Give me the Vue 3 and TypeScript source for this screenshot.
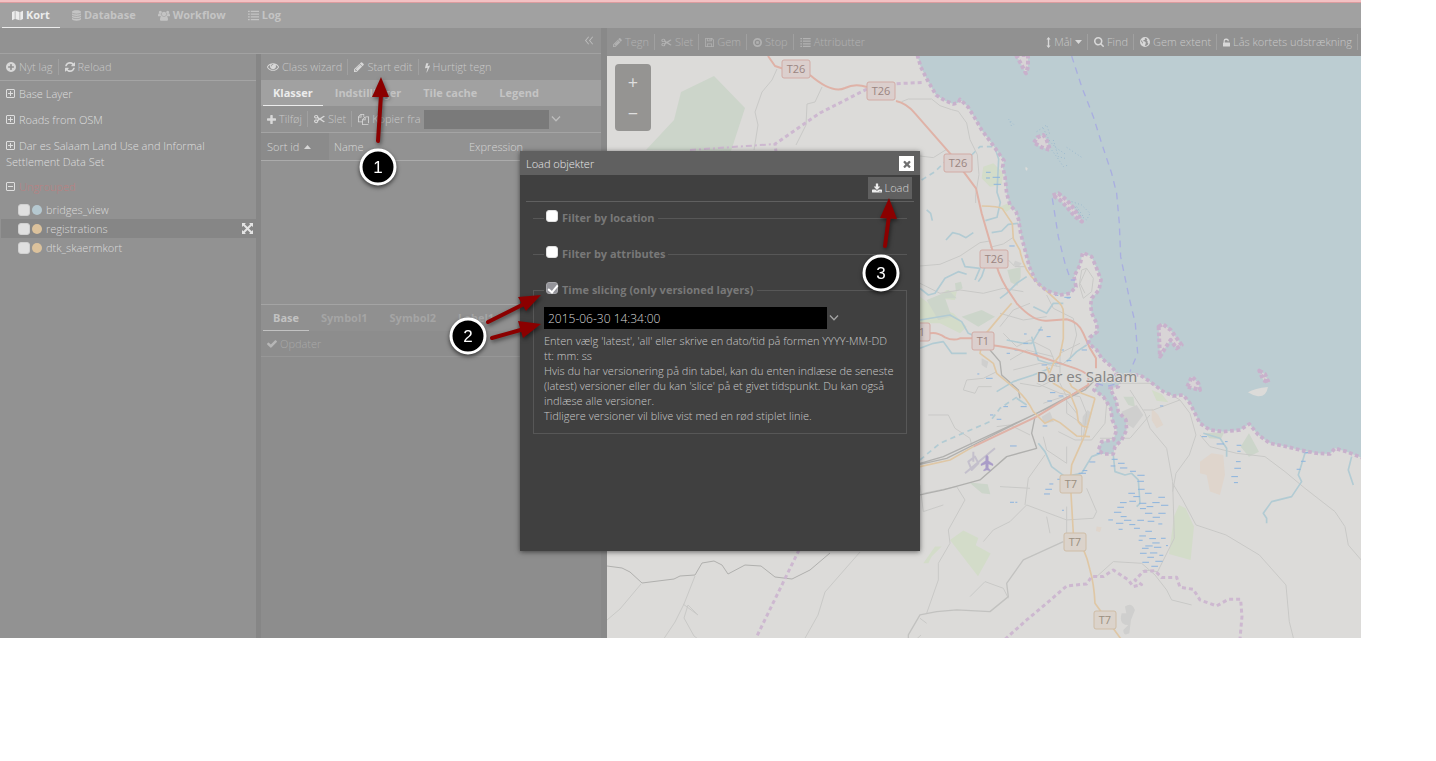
<script setup lang="ts">
import { h, ref } from 'vue'

interface Glyph { box: string; d: string }

const glyphs: Record<string, Glyph> = {
  map: { box: '0 0 16 14', d: 'M0 2l4-2v12l-4 2zM5 0l6 2v12l-6-2zM12 2l4-2v12l-4 2z' },
  database: { box: '0 0 14 16', d: 'M7 0c4 0 7 1 7 2.300V3c0 1.300-3 2.300-7 2.300S0 4.300 0 3v-.7C0 1 3 0 7 0zM0 4.500c1.500 1.300 4 1.800 7 1.800s5.500-.5 7-1.800v2c0 1.300-3 2.300-7 2.300S0 7.800 0 6.500zM0 8c1.500 1.300 4 1.800 7 1.800s5.500-.5 7-1.800v2c0 1.300-3 2.300-7 2.300S0 11.300 0 10zM0 11.500c1.500 1.300 4 1.800 7 1.800s5.500-.5 7-1.800v2C14 15 11 16 7 16s-7-1-7-2.500z' },
  users: { box: '0 0 18 16', d: 'M3.500 1a2.300 2.300 0 1 1 0 4.600a2.300 2.300 0 1 1 0-4.600zM14.500 1a2.300 2.300 0 1 1 0 4.600a2.300 2.300 0 1 1 0-4.600zM9 2.500a3.300 3.300 0 1 1 0 6.600a3.300 3.300 0 1 1 0-6.600zM0 9V7.500C0 6 .8 5 1.500 5c1 1 2.500 1.400 3.500.9C4.800 7.200 5.200 8 5.800 9zM18 9V7.500C18 6 17.200 5 16.500 5c-1 1-2.500 1.400-3.500.9c.2 1.300-.2 2.100-.8 3.100zM3 14c0-3 1-5.300 3-5.300C7.800 10.200 10.200 10.200 12 8.700c2 0 3 2.300 3 5.300c0 1.200-.8 2-2 2H5c-1.200 0-2-.8-2-2z' },
  list: { box: '0 0 16 14', d: 'M0 0h2.500v2H0zM4 0h12v2H4zM0 4h2.500v2H0zM4 4h12v2H4zM0 8h2.500v2H0zM4 8h12v2H4zM0 12h2.500v2H0zM4 12h12v2H4z' },
  plusCircle: { box: '128 128 1536 1536', d: 'M1344 960v-128q0-26-19-45t-45-19h-256v-256q0-26-19-45t-45-19h-128q-26 0-45 19t-19 45v256h-256q-26 0-45 19t-19 45v128q0 26 19 45t45 19h256v256q0 26 19 45t45 19h128q26 0 45-19t19-45v-256h256q26 0 45-19t19-45zm320-64q0 209-103 385.500t-279.500 279.500-385.500 103-385.500-103-279.500-279.500-103-385.500 103-385.500 279.500-279.500 385.500-103 385.500 103 279.500 279.500 103 385.500z' },
  refresh: { box: '128 128 1536 1536', d: 'M1639 1056q0 5-1 7-64 268-268 434.500t-478 166.500q-146 0-282.500-55t-243.500-157l-129 129q-19 19-45 19t-45-19-19-45v-448q0-26 19-45t45-19h448q26 0 45 19t19 45-19 45l-137 137q71 66 161 102t187 36q134 0 250-65t186-179q11-17 53-117 8-23 30-23h192q13 0 22.500 9.500t9.500 22.500zm25-800v448q0 26-19 45t-45 19h-448q-26 0-45-19t-19-45 19-45l138-138q-148-137-349-137-134 0-250 65t-186 179q-11 17-53 117-8 23-30 23h-199q-13 0-22.500-9.500t-9.500-22.500v-7q65-268 270-434.500t480-166.500q146 0 284 55.500t245 156.500l130-129q19-19 45-19t45 19 19 45z' },
  eye: { box: '0 384 1792 1152', d: 'M1664 960q-152-236-381-353 61 104 61 225 0 185-131.500 316.500t-316.500 131.500-316.500-131.500-131.500-316.500q0-121 61-225-229 117-381 353 133 205 333.500 326.500t434.500 121.500 434.500-121.500 333.500-326.500zm-720-384q0-20-14-34t-34-14q-125 0-214.500 89.500t-89.500 214.500q0 20 14 34t34 14 34-14 14-34q0-86 61-147t147-61q20 0 34-14t14-34zm848 384q0 34-20 69-140 230-376.500 368.500t-499.500 138.500-499.500-139-376.500-368q-20-35-20-69t20-69q140-229 376.500-368t499.500-139 499.500 139 376.500 368q20 35 20 69z' },
  pencil: { box: '128 128 1536 1536', d: 'M491 1536l91-91-235-235-91 91v107h128v128h107zm523-928q0-22-22-22-10 0-17 7l-542 542q-7 7-7 17 0 22 22 22 10 0 17-7l542-542q7-7 7-17zm-54-192l416 416-832 832h-416v-416zm683 96q0 53-37 90l-166 166-416-416 166-165q36-38 90-38 53 0 91 38l235 234q37 39 37 91z' },
  bolt: { box: '448 0 896 1792', d: 'M1333 566q18 20 7 44l-540 1157q-13 25-42 25-4 0-14-2-17-5-25.500-19t-4.500-30l197-808-406 101q-4 1-12 1-18 0-31-11-18-15-13-39l201-825q4-14 16-23t28-9h328q19 0 32 12.500t13 29.500q0 8-5 18l-171 463 396-98q8-2 12-2 19 0 34 15z' },
  plus: { box: '192 128 1408 1408', d: 'M1600 736v192q0 40-28 68t-68 28h-416v416q0 40-28 68t-68 28h-192q-40 0-68-28t-28-68v-416h-416q-40 0-68-28t-28-68v-192q0-40 28-68t68-28h416v-416q0-40 28-68t68-28h192q40 0 68 28t28 68v416h416q40 0 68 28t28 68z' },
  scissors: { box: '0 0 16 14', d: 'M3.200 1C5 1 6.400 2.300 6.200 4l2.100 1.800L14 2.200l2 .9L10.500 7L16 10.900l-2 .9L8.300 8.200L6.200 10c.2 1.700-1.200 3-3 3S0 11.900 0 10.300S1.300 7.700 3 7.700c.8 0 1.400.2 1.800.5L6.200 7L4.800 5.800c-.4.3-1 .5-1.800.5C1.300 6.300 0 5.200 0 3.700S1.400 1 3.200 1zM3 2.500c-.8 0-1.400.5-1.400 1.200s.6 1.200 1.400 1.200s1.500-.5 1.500-1.200S3.800 2.500 3 2.500zM3 9.100c-.8 0-1.400.5-1.400 1.200s.6 1.200 1.400 1.200s1.500-.5 1.500-1.200S3.800 9.100 3 9.100z' },
  copy: { box: '0 0 16 16', d: 'M4 0h5v4.500h2V3.500h5V13h-1V16H6v-4H0V4zM4 1.500L1.500 4H4zM5 1.200V5H1.200v5.800H6V8l3-3V4.500H8V1.200zM10 5.500L7.500 8H10zM11 4.700V9H7.200v5.800h7.600V4.700z' },
  save: { box: '0 0 14 14', d: 'M0 1q0-1 1-1h10l3 3v10q0 1-1 1H1q-1 0-1-1zM1.200 1.200v11.600H3V8.500h8v4.300h1.800V3.500L10.500 1.200V5H3V1.200zM4.200 1.200v2.600h5V1.200zM4.200 9.700v3.100h5.600V9.700zM7 1.500h1.500v2H7z' },
  stop: { box: '0 0 14 14', d: 'M7 0a7 7 0 1 1 0 14a7 7 0 1 1 0-14zM7 2.700a4.300 4.300 0 1 0 0 8.600a4.300 4.300 0 1 0 0-8.600zM5 5h4v4H5z' },
  arrowsV: { box: '0 0 6 16', d: 'M3 0l3 3.500H4v9h2L3 16l-3-3.500h2v-9H0z' },
  caretDown: { box: '0 0 14 8', d: 'M0 0h14L7 8z' },
  caretUp: { box: '0 0 14 8', d: 'M0 8h14L7 0z' },
  search: { box: '64 128 1664 1664', d: 'M1216 832q0-185-131.500-316.500t-316.500-131.500-316.500 131.500-131.500 316.500 131.500 316.500 316.500 131.500 316.500-131.500 131.500-316.500zm512 832q0 52-38 90t-90 38q-54 0-90-38l-343-342q-179 124-399 124-143 0-273.500-55.500t-225-150-150-225-55.500-273.500 55.500-273.500 150-225 225-150 273.500-55.500 273.500 55.500 225 150 150 225 55.500 273.500q0 220-124 399l343 343q37 37 37 90z' },
  globe: { box: '0 0 14 14', d: 'M7 0a7 7 0 1 1 0 14a7 7 0 1 1 0-14zM8 1.300l-1.500.9l.8 1L6 4.200l-1.500.3L5 6l2 .3L8.200 8L7.500 10.500l-.8 2C9.500 12.600 11 11 11.800 9.500L10.500 8l.3-1.700L9.300 5l1-2zM2.500 4.200L1.500 6l2.300 3.400l.6-1L3.500 7z' },
  unlock: { box: '0 0 12 14', d: 'M3 7V4.500q0-2 2-2h1q2 0 2 2V5h2V4q0-4-4-4H5Q1 0 1 4v3q-1 0-1 1v5q0 1 1 1h10q1 0 1-1V8q0-1-1-1z' },
  check: { box: '121 188 1550 1334', d: 'M1671 566q0 40-28 68l-724 724-136 136q-28 28-68 28t-68-28l-136-136-362-362q-28-28-28-68t28-68l136-136q28-28 68-28t68 28l294 295 656-657q28-28 68-28t68 28l136 136q28 28 28 68z' },
  times: { box: '302 238 1188 1316', d: 'M1490 1322q0 40-28 68l-136 136q-28 28-68 28t-68-28l-294-294-294 294q-28 28-68 28t-68-28l-136-136q-28-28-28-68t28-68l294-294-294-294q-28-28-28-68t28-68l136-136q28-28 68-28t68 28l294 294 294-294q28-28 68-28t68 28l136 136q28 28 28 68t-28 68l-294 294 294 294q28 28 28 68z' },
  download: { box: '64 0 1664 1536', d: 'M1344 1344q0-26-19-45t-45-19-45 19-19 45 19 45 45 19 45-19 19-45zm256 0q0-26-19-45t-45-19-45 19-19 45 19 45 45 19 45-19 19-45zm128-224v320q0 40-28 68t-68 28h-1472q-40 0-68-28t-28-68v-320q0-40 28-68t68-28h465l135 136q58 56 136 56t136-56l136-136h464q40 0 68 28t28 68zm-325-569q17 41-14 70l-448 448q-18 19-45 19t-45-19l-448-448q-31-29-14-70 17-39 59-39h256v-448q0-26 19-45t45-19h256q26 0 45 19t19 45v448h256q42 0 59 39z' },
  expand: { box: '0 0 14 14', d: 'M0 0h5L3.500 1.700L7 5.200l3.500-3.500L9 0h5v5l-1.700-1.500L8.800 7l3.500 3.500L14 9v5H9l1.500-1.700L7 8.800l-3.500 3.500L5 14H0V9l1.700 1.500L5.200 7L1.700 3.500L0 5z' },
  plusBox: { box: '0 0 9 9', d: 'M1 0h7l1 1v7l-1 1H1L0 8V1zM1 1v7h7V1zM4 2h1v2h2v1H5v2H4V5H2V4h2z' },
  minusBox: { box: '0 0 9 9', d: 'M1 0h7l1 1v7l-1 1H1L0 8V1zM1 1v7h7V1zM2 4h5v1H2z' },
  chevron: { box: '0 0 12 8', d: 'M0 1.200L1.200 0L6 5L10.800 0L12 1.200L6 7.500z' },
  collapse: { box: '0 0 14 14', d: 'M6 0l1 .8L2 7l5 6.200L6 14L0 7zM13 0l1 .8L9 7l5 6.200L13 14L7 7z' },
}

const Icon = (props: { name: string; w: number; hgt: number }) =>
  h('svg', { viewBox: glyphs[props.name].box, width: props.w, height: props.hgt, 'aria-hidden': 'true' }, [
    h('path', { d: glyphs[props.name].d, 'fill-rule': 'evenodd', fill: 'currentColor' }),
  ])
Icon.props = ['name', 'w', 'hgt']

const mainTabs = [
  { label: 'Kort', icon: 'map', w: 11 },
  { label: 'Database', icon: 'database', w: 9 },
  { label: 'Workflow', icon: 'users', w: 12 },
  { label: 'Log', icon: 'list', w: 11 },
]
const classTabs = ['Klasser', 'Indstillinger', 'Tile cache', 'Legend']
const styleTabs = ['Base', 'Symbol1', 'Symbol2', 'Label1']
const groups = ['Base Layer', 'Roads from OSM', 'Dar es Salaam Land Use and Informal Settlement Data Set']
const layers = [
  { name: 'bridges_view', tone: 'blue', on: false },
  { name: 'registrations', tone: 'sand', on: true },
  { name: 'dtk_skaermkort', tone: 'sand', on: false },
]
const drawTools = [
  { label: 'Tegn', icon: 'pencil', w: 9 },
  { label: 'Slet', icon: 'scissors', w: 11 },
  { label: 'Gem', icon: 'save', w: 9 },
  { label: 'Stop', icon: 'stop', w: 9 },
  { label: 'Attributter', icon: 'list', w: 11 },
]
const shields = [
  { t: 'T26', x: 782, y: 60, w: 28, c: 'red' },
  { t: 'T26', x: 867, y: 82, w: 28, c: 'red' },
  { t: 'T26', x: 944, y: 154, w: 28, c: 'red' },
  { t: 'T26', x: 980, y: 250, w: 28, c: 'red' },
  { t: 'T1', x: 908, y: 323, w: 22, c: 'red' },
  { t: 'T1', x: 972, y: 332, w: 22, c: 'red' },
  { t: 'T7', x: 1060, y: 475, w: 22, c: 'tan' },
  { t: 'T7', x: 1064, y: 533, w: 22, c: 'tan' },
  { t: 'T7', x: 1094, y: 611, w: 22, c: 'tan' },
]
const byLocation = ref(false)
const byAttributes = ref(false)
const slicing = ref(true)
const moment = ref('2015-06-30 14:34:00')
const copyFrom = ref('')
</script>

<template>
  <div class="page">
    <div class="app">
      <div class="stripe"></div>
      <nav class="tabs main-tabs">
        <button v-for="(t, i) in mainTabs" :key="t.label" class="tab" :class="{ active: i === 0 }">
          <Icon :name="t.icon" :w="t.w" :hgt="11" /><span>{{ t.label }}</span>
        </button>
      </nav>

      <div class="body">
        <div class="side">
          <div class="side-head">
            <button class="plain" aria-label="Collapse"><Icon name="collapse" :w="8" :hgt="9" /></button>
          </div>
          <div class="side-body">
            <section class="tree">
              <div class="toolbar lined">
                <button class="tool"><Icon name="plusCircle" :w="10" :hgt="10" />Nyt lag</button>
                <button class="tool"><Icon name="refresh" :w="10" :hgt="10" />Reload</button>
              </div>
              <p v-for="g in groups" :key="g" class="group"><Icon name="plusBox" :w="9" :hgt="9" />{{ g }}</p>
              <p class="group ungrouped"><Icon name="minusBox" :w="9" :hgt="9" /><span>Ungrouped</span></p>
              <ul class="layers">
                <li v-for="l in layers" :key="l.name" :class="{ on: l.on }">
                  <label><input type="checkbox" class="box dim" /><i class="dot" :class="l.tone"></i>{{ l.name }}</label>
                  <button v-if="l.on" class="plain" aria-label="Zoom to layer"><Icon name="expand" :w="11" :hgt="11" /></button>
                </li>
              </ul>
            </section>

            <section class="classes">
              <div class="toolbar">
                <button class="tool"><Icon name="eye" :w="12" :hgt="8" />Class wizard</button>
                <button class="tool"><Icon name="pencil" :w="10" :hgt="10" />Start edit</button>
                <button class="tool"><Icon name="bolt" :w="5" :hgt="11" />Hurtigt tegn</button>
              </div>
              <div class="tabs">
                <button v-for="(t, i) in classTabs" :key="t" class="tab" :class="{ active: i === 0 }">{{ t }}</button>
              </div>
              <div class="toolbar lined">
                <button class="tool"><Icon name="plus" :w="9" :hgt="9" />Tilføj</button>
                <button class="tool"><Icon name="scissors" :w="11" :hgt="10" />Slet</button>
                <label class="tool copy" for="copy-from"><Icon name="copy" :w="11" :hgt="11" />Kopier fra</label>
                <input id="copy-from" v-model="copyFrom" class="combo" type="text" />
                <button class="plain drop" aria-label="Choose layer"><Icon name="chevron" :w="10" :hgt="6" /></button>
              </div>
              <div class="grid">
                <table>
                  <thead>
                    <tr><th class="sorted">Sort id <Icon name="caretUp" :w="7" :hgt="4" /></th><th class="name">Name</th><th>Expression</th></tr>
                  </thead>
                </table>
              </div>
              <div class="tabs faint">
                <button v-for="(t, i) in styleTabs" :key="t" class="tab" :class="{ active: i === 0 }">{{ t }}</button>
              </div>
              <div class="toolbar faint-bar">
                <button class="tool"><Icon name="check" :w="10" :hgt="9" />Opdater</button>
              </div>
            </section>
          </div>
        </div>

        <main class="map-pane">
          <div class="toolbar map-bar">
            <button v-for="t in drawTools" :key="t.label" class="tool off"><Icon :name="t.icon" :w="t.w" :hgt="9" />{{ t.label }}</button>
            <span class="spring"></span>
            <button class="tool"><Icon name="arrowsV" :w="5" :hgt="11" />Mål <Icon name="caretDown" :w="7" :hgt="4" /></button>
            <button class="tool"><Icon name="search" :w="10" :hgt="10" />Find</button>
            <button class="tool"><Icon name="globe" :w="10" :hgt="10" />Gem extent</button>
            <button class="tool"><Icon name="unlock" :w="7" :hgt="9" />Lås kortets udstrækning</button>
          </div>
          <div class="map">
            <svg class="chart" viewBox="607 56 754 582" preserveAspectRatio="xMinYMin slice" role="img" aria-label="Map">
              <path class="wood" d="M646 150L674 120L681 92L714 76L745 108L731 151z" />
              <g transform="translate(900 50) scale(.3333)">
                <g class="green">
                  <path d="M250 350l30-10 30 30-5 35-35 5-25-25zM105 745l35-25 30 5-5 25zM300 470l25-10 15 10-20 15zM60 740l40 30 60 20 40 40-20 20-60-30-60 0-30-40z" />
                  <path d="M150 1470l40-28 45 22-8 22 45 25-38 68zM822 1400l15-35 20 10 25 55-10 100-65-18zM70 1540l35-50 20 0-30 30-10 20z" />
                  <path d="M755 1020l30 12 20 25-35-5zM440 645l20 15-10 20z" />
                </g>
                <g class="wood">
                  <path d="M322 660l40-8 0 30-10 25-20-10zM165 700l18-5 5 20-20 10zM110 745l35-25 25 25zM80 750l50-20 25 70-40 10zM185 800l60-20 40 20-50 30zM1022 1190l25-40 30 55-30 15zM915 1150l58-3-10 20-35-2zM208 1298l55 5 8 30-25-3zM670 1040l30 0 5 30-20-5z" />
                </g>
                <path class="town" d="M345 632l20 8-10 12-15-8zM245 925l20 10-5 20-15-10zM425 1100l25-15 12 30-30 5zM548 1100l15-20 12 10-10 35-18 5zM665 1085l45-20 20 30-30 40-30-20zM675 1670q20-15 30 10l-12 30-5 40q-18 10-18-10l15-15q-30 0-20-35l14 0z" />
                <path class="sand" d="M755 1075l20 20 15 30-20 10-15-25zM900 1235l35-25 35 5 5 60-15 60-30-10-10-50-20-5zM590 1430l15 2-5 15-12-4z" />

                <g class="track">
                  <path d="M5 155l20-8 70 0 25 20 35 12 20 5 25 35 10 50 22 45 5 60-10 60 0 25M60 318l40 5 40-25" />
                  <path d="M60 648l60-5 60-25 60-40 30-5M270 592l40-10 30-20M325 630l20 20 30 0M60 700l60 30 60-10 70 10 60-15 60 10" />
                  <path d="M545 660l15-5 20 30-5 40-25 20-12-40zM560 655l-20 45 15 30M440 735l20 40 60 30 10 50-20 70-25 20" />
                  <path d="M300 830l40-50 50-20M310 850l40 40 40-20 60 30 20 50M330 930l50-30 80 20M340 960l80-20 60 10M360 1000l60 10 40-20M300 790l70 20 70-10" />
                  <path d="M85 1095l60 0 20 40 45 30 5 20M190 1020l10-30 50-5 40-20M190 1020l35 10 10-20 40 0M290 1130l40-5 60 30" />
                  <path d="M470 980l30 60 0 50 45 30 0 50M410 1000l70 30 60 10 20 50-10 70M430 1060l60-20 40 50M480 970l0-60 60-30M430 1160l10 40 60 40 0-50" />
                  <path d="M655 1000l100 0 85 50 30 40 18 65-20 60-40 55-10 55M690 1020l45 70 15 45 50 60 18 100 5 170-50 100-40-5M730 1080l30 0 80-30M600 1000l20 60-5 60-40 50-50 0-50-25M600 1165l90 0 60-70M900 1155l30 35 80 20 85 10 60 45 60 50 90 70 30 45 10 55 60 70" />
                  <path d="M818 1300l30 50 40 75 90 30 100 60 80 90 10 110 20 80M590 1580l50-45 85 5 40 35 35 45 15 30 60 15" />
                  <path d="M60 1305l10 80 60-20M70 1330l100-20 25 40-50 90 5 40-35 60 0 50-35 100M250 1475l30-35 50-25 50-50 120 45 80-5 10-20-30-70M300 1310l90 5M375 1365l10-80 50-70M440 1400l10 50M500 1370l0 90M60 1705l20 15M210 1640l45-45 55 20 15 30" />
                </g>
                <g class="rail">
                  <path d="M60 1240l70-20 280-130 145-70 30-30M60 1243l80-18 280-140 150-80" />
                  <path d="M270 900l30 35 5 40 50 45 5 25M60 1335l70-15 110-30 80-70 90-25-15-45 10-50" />
                  <path class="dim" d="M25 1765l0-10 35-60 50-10 60-5 100 5 55-45-5-40 50-70 120-55" />
                </g>

                <g class="river">
                  <path d="M80 480l12 10 5 22M138 570l20-22 20 5 20 10 22-15M185 625l10 25 45 5-15 35M60 715l25 20 20-5 30-45 40-20 25 8M255 650l-10 30-10 15M60 810l90-15 35 20 20 35 25 10M60 895l40-15 30-5 25 35 45 0" />
                  <path d="M275 548l30-5 20-20 30-3M256 512l35-10 10-45-10-30 5-100-10-30M300 745l20-15 30-30 30-20M415 1180l20 25 20 45 40 30 50-10 30-50 40-15M400 770l40 20 20-30 30 0" />
                  <path d="M320 870l50 10 25 0 30-50M395 860l20 70 30 10 40 0M290 1025l50-30 60-20 50-20M500 935l30-30 30-20M350 1045l30 20" />
                  <path d="M640 1215l5 50 30 10 20-5 20 20 5 70-10 10M910 1150l50 15 20 30 0 25M1235 1205l-20 5-20 65 10 20-30 45-60 15-25 35 10 15 0 15M1355 1220l-10 40 15 45" />
                </g>
                <path class="river broken" d="M60 1230l60-50 80-35 70-30 30-40 60-40M65 390l40-25 30-30M215 315l25-25 50 0" />
                <path class="marsh" d="M258 367h14M258 384h12M278 382h22M281 403h22M328 588h16M465 736h10M493 742h20M500 744h10M372 852h8M415 840h14M440 860h12M480 900h12M500 932h14M398 912h14M344 900h12M320 910h10M258 985h20M232 972h6M425 945h16M472 940h12M450 1028h16M476 1038h14M442 1053h14M310 1070h14M362 1070h18M290 1108h14M270 1095h10M780 1068h10M428 1128h14M545 900h16M370 880h14M330 1188h20M905 1160h16M950 1182h22M975 1175h8M1010 1186h14M1012 1204h10" />
                <path class="marsh" d="M590 1210h18M635 1228h18M654 1240h20M632 1248h14M660 1254h22M690 1264h18M712 1276h22M712 1294h20M568 1236h18M548 1262h14M536 1270h22M714 1318h20M685 1330h20M700 1340h20M735 1330h20M775 1342h20M660 1358h20M688 1354h20M717 1360h22M757 1358h22M740 1370h20M783 1366h22M652 1372h20M720 1376h18M642 1387h22M735 1390h22M775 1390h22M662 1400h18M758 1402h22M625 1410h14M672 1411h22M712 1411h20M743 1414h20M648 1420h22M688 1424h18M775 1422h12M702 1435h18M656 1438h12M736 1444h20M718 1458h20M783 1465h14M748 1466h20M716 1471h12M757 1479h22M736 1488h22M798 1487h6M726 1495h20M762 1492h22M720 1510h20M750 1509h22M778 1516h12M742 1522h20M766 1534h22M727 1537h20M754 1549h20M1008 1235h14M1003 1255h20M994 1280h20M1002 1298h12M448 1302h12M436 1318h20M432 1332h18M330 1357h12M346 1357h6M486 1381h6M1208 1208h20M1203 1234h14M1190 1258h12M472 1288h10" />

                <g class="trunk">
                  <path d="M-12 153Q20 160 45 190L150 310L228 415L245 490L280 610Q292 670 320 715L350 760Q400 815 440 812L500 808Q535 815 550 850L570 895L588 925V955" />
                  <path d="M90 850q20-5 45 12q25 12 45 3h45M270 885q80 10 120 25l120 40q50 15 55 30v25L410 1100L220 1190" />
                </g>
                <g class="road">
                  <path d="M245 468q50 0 62 8l30 45 3 45 20 35q10 60 50 95l60 55q20 15 20 35v80l-10 50-20 25-20 50M335 760l-35 40-50 60-10 50 40 30 10 30 60 50q30 25 50 65l35 35 25-12 20 10 50 40 40 2M440 950l20 50 50 30 20 50 5 35q15 20 30 15M585 1045l-30 110-40 90-4 50L520 1450Q555 1490 570 1560Q582 1600 585 1660L665 1770M585 1045l-40-15-30-20-10-20M220 1190l-70 40-90 20" />
                </g>

                <path class="sea" d="M52 15L62 50L82 90L108 135L135 152L160 162L175 158L180 148L205 172L225 205L245 240L275 280L300 315L312 332L308 350L315 380L320 430L330 465L348 485L356 510L362 550L375 600L388 650L408 695L440 722L480 735L510 730L528 710L522 680L540 645L548 608L575 620L590 655L603 690L597 720L575 745L572 765L575 790L590 820L592 845L570 862L565 880L590 900L605 925L635 950L650 970L640 990L600 990L582 1020L610 1040L632 1075L637 1110L650 1140L640 1170L605 1175L595 1200L610 1212L640 1212L645 1190L665 1170L680 1140L678 1110L655 1085L648 1050L630 1015L655 1010L660 990L690 975L720 975L750 995L790 1025L820 1038L850 1035L870 1060L885 1090L900 1120L930 1140L970 1145L1020 1140L1048 1122L1075 1155L1110 1180L1160 1190L1200 1200L1250 1210L1290 1212L1305 1195L1340 1205L1390 1225V5H52z" />
                <path class="isle" d="M348 15L362 40L378 70L384 50L384 15zM402 278L412 262L430 255L440 270L450 300L425 292zM458 436L475 430L500 450L525 480L546 515L525 500L500 470L480 450zM776 830L788 822L812 840L845 885L830 895L812 870L795 895L780 920zM1078 962L1095 972L1106 998L1090 990zM862 1010L876 980L895 1000L900 1020z" />
                <path class="land" d="M1044 1027q20-12 60-16q-5 30-30 28q-15-2-30-12zM377 350l6 5-2 8-5-5z" />
                <path class="ferry" d="M515 18L545 110L580 200L605 280L635 370L650 430L658 520L662 620L688 745L706 820L713 910L690 965M457 445L475 560L495 640L512 690L525 690M590 1000l30 10 40-12" />
                <g class="shoal">
                  <path d="M410 245l30-20 10 30M430 235l20 40 20 20 30 20M455 300l15 20 20 30 15-5M460 270l15 50 20 5M500 292l45 30M325 207l20 20M330 215l5 15M515 455l30 10 25 25-10 20-20-15-15-25M530 470l20 30" />
                </g>
                <path class="bound" d="M-10 101L72 97M315 1768L380 1710L440 1660L500 1608L560 1602L575 1580L610 1580L640 1560L685 1590L700 1610L725 1604L705 1590L730 1565L765 1562L785 1583L830 1582L840 1612L880 1618L900 1650L950 1668L985 1648L1022 1648L1026 1700L1020 1768" />
                <g class="plane"><path d="M195 1270l90-75M205 1235l20-15 10 20-20 20zM220 1205v30" /><path class="jet" d="M261 1215l4 5v12l14 10v5l-14-5v12l6 6v3l-10-3-10 3v-3l6-6v-12l-14 5v-5l14-10v-12z" /></g>
              </g>

              <path class="trunk thin" d="M768 56L775 66L784 69M810 75Q832 94 845 88Q855 83 867 87" />
              <path class="track px" d="M777 69L772 80L762 92L755 112L758 125L754 150M822 87L815 102L807 104L806 125L796 145M607 620L620 609L641 584M695 576L684 604L675 622L663 640M683 604L698 615L688 605L684 618L694 636L702 642M860 552L825 592L818 615L804 640M921 635L910 645" />
              <path class="rail px" d="M607 566L622 568L630 572L642 583L674 579L680 576L695 575L702 563L714 561L722 565L728 574L745 565L761 566L775 577L792 579L810 570L830 553" />
              <path class="bound px" d="M867 89L820 113L775 144L776 152M799 550L756 638" />
              <path class="bound faintly" d="M690 150L775 144" />
              <g v-for="(s, i) in shields" :key="i" class="shield" :class="s.c">
                <rect :x="s.x" :y="s.y" :width="s.w" height="18" rx="2" />
                <text :x="s.x + s.w / 2" :y="s.y + 13">{{ s.t }}</text>
              </g>
              <text class="city" x="1087" y="382">Dar es Salaam</text>
            </svg>
            <div class="zoom">
              <button aria-label="Zoom in">+</button>
              <button aria-label="Zoom out">−</button>
            </div>
          </div>
        </main>
      </div>
    </div>

    <div class="dialog" role="dialog" aria-labelledby="dialog-title">
      <header>
        <span id="dialog-title">Load objekter</span>
        <button class="close" aria-label="Close"><Icon name="times" :w="8" :hgt="8" /></button>
      </header>
      <div class="dialog-bar">
        <button class="load"><Icon name="download" :w="10" :hgt="10" />Load</button>
      </div>
      <form class="dialog-body" @submit.prevent>
        <fieldset class="flat"><legend><label><input v-model="byLocation" type="checkbox" class="box" />Filter by location</label></legend></fieldset>
        <fieldset class="flat"><legend><label><input v-model="byAttributes" type="checkbox" class="box" />Filter by attributes</label></legend></fieldset>
        <fieldset>
          <legend><label><input v-model="slicing" type="checkbox" class="box" />Time slicing (only versioned layers)</label></legend>
          <div class="when">
            <input v-model="moment" type="text" aria-label="Version" />
            <button class="plain drop" type="button" aria-label="Choose version"><Icon name="chevron" :w="10" :hgt="6" /></button>
          </div>
          <p>Enten vælg 'latest', 'all' eller skrive en dato/tid på formen YYYY-MM-DD tt: mm: ss<br />Hvis du har versionering på din tabel, kan du enten indlæse de seneste (latest) versioner eller du kan 'slice' på et givet tidspunkt. Du kan også indlæse alle versioner.<br />Tidligere versioner vil blive vist med en rød stiplet linie.</p>
        </fieldset>
      </form>
    </div>

    <svg class="notes" width="940" height="400" viewBox="0 0 940 400" aria-hidden="true">
      <g class="arrow">
        <path class="shaft" d="M381 95L378 141M488 322L524 304M492 338L524 329M889 216L885 246" />
        <path d="M381 77L389 97L372 97zM541 295L526 311L518 297zM541 324L523 338L518 321zM889 198L897 219L880 218z" />
      </g>
      <g class="step">
        <circle cx="378" cy="167" r="17" /><text x="378" y="173">1</text>
        <circle cx="468" cy="336" r="17" /><text x="468" y="342">2</text>
        <circle cx="881" cy="273" r="17" /><text x="881" y="279">3</text>
      </g>
    </svg>
  </div>
</template>

<style>
body { margin: 0; background: #fff; }
</style>

<style scoped>
.page { position: relative; box-sizing: border-box; height: 100vh; padding: 0 75px 123px 0; overflow: hidden; font-family: 'Open Sans', 'Noto Sans', sans-serif; font-size: 11px; font-weight: 300; line-height: 16px; color: #d6d6d6; }
.page * { box-sizing: border-box; }
button, input { font: inherit; color: inherit; margin: 0; }
button { background: none; border: 0; padding: 0; white-space: nowrap; }
svg { flex: none; }
.app { height: 100%; display: flex; flex-direction: column; background: #929292; }
.stripe { height: 3px; flex: none; background: #f3c1c3; border-bottom: 1px solid #dc9c9f; }
.tabs { display: flex; flex: none; gap: 2px; height: 26px; padding: 0 2px; background: #a1a1a1; }
.main-tabs { height: 25px; }
.tab { display: flex; align-items: center; gap: 3px; padding: 0 10px; font-weight: 700; color: #c4c4c4; border-bottom: 1px solid transparent; }
.tab.active { color: #ececec; border-bottom-color: #ececec; }
.body { flex: 1; min-height: 0; display: flex; }
.side { width: 607px; flex: none; display: flex; flex-direction: column; border-right: 6px solid #898989; }
.side-head { height: 26px; flex: none; display: flex; align-items: center; justify-content: flex-end; padding-right: 8px; border-bottom: 1px solid #a2a2a2; color: #c0c0c0; }
.side-body { flex: 1; display: flex; min-height: 0; }
.plain { display: flex; align-items: center; }
.tree { width: 261px; flex: none; border-right: 5px solid #868686; }
.toolbar { display: flex; flex: none; align-items: center; height: 26px; }
.toolbar.lined { height: 27px; border-bottom: 1px solid #a4a4a4; }
.tool { display: flex; align-items: center; gap: 3px; height: 16px; padding: 0 5px 0 6px; border-right: 1px solid #a0a0a0; white-space: nowrap; color: #c8c8c8; }
.tool svg { color: #d8d8d8; }
.tool.off, .tool.off svg { color: #b2b2b2; }
.side .tool:last-child, .tool.copy, .tool:has(+ .spring) { border-right: 0; }
.group { margin: 0; padding: 5px 30px 5px 6px; color: #dedede; }
.group svg { margin-right: 4px; }
.ungrouped { padding-top: 4px; }
.ungrouped span { color: #bd7f7f; }
.layers { list-style: none; margin: 0; padding: 0 0 0 1px; }
.layers li { height: 19px; display: flex; align-items: center; justify-content: space-between; padding: 0 3px 0 17px; color: #dadada; }
.layers li.on { background: #868686; }
.layers label { display: flex; align-items: center; }
.layers .plain { color: #e4e4e4; }
.box { appearance: none; flex: none; width: 12px; height: 12px; border-radius: 3px; background: #fff; border: 1px solid #e0e0e0; position: relative; }
.box.dim { background: #e0e0e0; border-color: #d0d0d0; }
.box:checked { background: #94949a; border-color: #a8a8ac; }
.box:checked::after { content: ''; position: absolute; left: 3px; top: 0; width: 4px; height: 8px; border: solid #fff; border-width: 0 2px 2px 0; transform: rotate(40deg); }
.dot { width: 10px; height: 10px; border-radius: 50%; margin: 0 4px 0 2px; }
.dot.blue { background: #b5c8d0; }
.dot.sand { background: #dcc29c; }
.classes { flex: 1; min-width: 0; display: flex; flex-direction: column; background: #8d8d8d; }
.classes .toolbar, .grid { background: #929292; }
.combo { width: 125px; height: 19px; border: 0; background: #7a7a7a; padding: 0 4px; }
.copy { padding-right: 3px; }
.drop { padding: 0 2px; color: #bdbdbd; }
.grid { height: 172px; flex: none; border-bottom: 1px solid #a4a4a4; }
table { width: 100%; border-collapse: collapse; table-layout: fixed; }
th { height: 27px; padding: 2px 0 0 5px; text-align: left; font-weight: 300; border-bottom: 1px solid #ababab; }
th svg { margin: 0 0 2px 2px; }
.sorted { width: 68px; background: #8b8b8b; padding-left: 6px; }
.name { width: 135px; }
.tabs.faint { background: #909090; height: 26px; }
.faint .tab { color: #a5a5a5; }
.faint .tab.active { color: #c2c2c2; border-bottom-color: #c2c2c2; }
.classes .faint-bar { background: #8d8d8d; border-bottom: 1px solid #979797; }
.faint-bar .tool { color: #a8a8a8; }
.faint-bar .tool svg { color: #b6b6b6; }
.map-pane { flex: 1; min-width: 0; display: flex; flex-direction: column; }
.map-bar { height: 28px; padding-right: 3px; background: #919191; }
.spring { flex: 1; }
.map { flex: 1; min-height: 0; position: relative; overflow: hidden; background: #dcdbd9; }
.chart { display: block; width: 100%; height: 100%; fill: none; stroke-linejoin: round; }
.wood { fill: #ccd5ca; }
.green { fill: #d3dcc9; }
.town { fill: #cfcfce; }
.sand { fill: #dfd5cc; }
.sea { fill: #bccdd2; stroke: #c8b1cc; stroke-width: 11; stroke-dasharray: 11 8; }
.isle { fill: #d8d4d6; stroke: #c8b1cc; stroke-width: 12; stroke-dasharray: 11 7; }
.land { fill: #dcdbd9; }
.track { stroke: #c9c9c7; stroke-width: 3; }
.track.px { stroke-width: 1; }
.rail { stroke: #b0b0ae; stroke-width: 4; }
.rail.px { stroke-width: 1; }
.rail .dim { stroke: #c2c2c0; }
.river { stroke: #b2cbd3; stroke-width: 5; }
.river.broken { stroke-dasharray: 16 12; }
.marsh { stroke: #8cb4de; stroke-width: 3; }
.trunk { stroke: #dfb2a7; stroke-width: 6; }
.trunk.thin { stroke-width: 2; }
.road { stroke: #dfc7a5; stroke-width: 5; }
.ferry { stroke: #a9aee0; stroke-width: 4; stroke-dasharray: 20 16; }
.shoal { stroke: #9cb9cd; stroke-width: 3; stroke-dasharray: 3 7; }
.bound { stroke: #cdb8d0; stroke-width: 9; stroke-dasharray: 12 9; }
.bound.px { stroke-width: 3; stroke-dasharray: 4 3; }
.bound.faintly { stroke-width: 2; stroke-dasharray: 6 3 2 3; }
.plane { stroke: #c4c0cc; stroke-width: 6; }
.jet { fill: #a99cc8; stroke: #a99cc8; stroke-width: 1; }
.shield text { font-size: 11px; font-weight: 400; text-anchor: middle; fill: #9a8581; }
.shield rect { stroke-width: 1; }
.shield.red rect { fill: #dbcfcd; stroke: #d2aba5; }
.shield.tan rect { fill: #dbd3cb; stroke: #cfbda6; }
.shield.tan text { fill: #9a8f80; }
.city { font-family: 'Noto Sans', sans-serif; font-size: 15px; font-weight: 400; text-anchor: middle; fill: #868686; stroke: #dcdbd9; stroke-width: 2; paint-order: stroke; }
.zoom { position: absolute; left: 8px; top: 8px; width: 36px; height: 67px; padding: 3px; border-radius: 4px; background: #959492; display: flex; flex-direction: column; }
.zoom button { flex: 1; font-size: 18px; font-weight: 400; color: #dedede; }
.dialog { position: absolute; left: 520px; top: 151px; width: 400px; height: 400px; background: #404040; box-shadow: 0 1px 5px rgba(0, 0, 0, .55); color: #c8c8c8; }
.dialog header { height: 24px; display: flex; align-items: center; justify-content: space-between; padding: 1px 6px 0; background: #606060; color: #e8e8e8; }
.close { width: 15px; height: 15px; display: grid; place-items: center; background: #fff; color: #707070; }
.dialog-bar { height: 27px; margin: 0 6px; padding: 2px 2px; display: flex; justify-content: flex-end; border-bottom: 1px solid #606060; }
.load { display: flex; align-items: center; gap: 3px; height: 22px; padding: 0 3px 0 4px; background: #606060; color: #d4d4d4; }
.load svg { color: #eee; }
.dialog-body { padding: 8px 13px 0; }
fieldset { margin: 0; min-width: 0; padding: 9px 10px 10px; border: 1px solid #575757; }
fieldset.flat { height: 36px; border-width: 1px 0 0; padding: 0 11px; }
legend { padding: 0 3px 0 2px; height: 16px; font-weight: 700; color: #787878; }
legend label { display: flex; align-items: flex-start; gap: 4px; }
.when { display: flex; align-items: center; height: 22px; }
.when input { width: 283px; height: 22px; border: 0; padding: 0 4px; background: #000; color: #d8d8d8; font-size: 12px; }
.when .drop { color: #a4a4a4; }
fieldset p { margin: 4px 0 0; line-height: 15px; color: #c8c8c8; }
.notes { position: absolute; left: 0; top: 0; pointer-events: none; }
.arrow { fill: #8b0000; filter: drop-shadow(1px 2px 2px rgba(0, 0, 0, .5)); }
.shaft { stroke: #8b0000; stroke-width: 4; stroke-linecap: round; }
.step { filter: drop-shadow(0 2px 2px rgba(0, 0, 0, .6)); }
.step circle { fill: #000; stroke: #fff; stroke-width: 3; }
.step text { font-family: 'Liberation Sans', Arial, sans-serif; font-size: 17px; font-weight: 400; text-anchor: middle; fill: #fff; }
</style>
